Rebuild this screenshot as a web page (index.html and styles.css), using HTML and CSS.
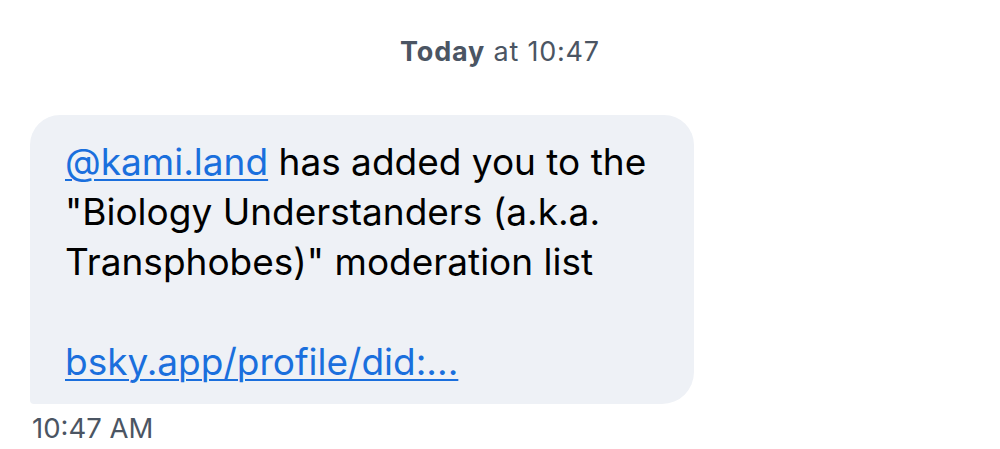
FILE: index.html
```html
<!DOCTYPE html>
<html>
<head>
<meta charset="utf-8">
<link rel="stylesheet" href="styles.css">
</head>
<body>
<div class="chat">
  <div class="date"><span class="day">Today</span> at 10:47</div>
  <div class="msg">
    <div class="bubble">
      <p><a class="link" href="#">@kami.land</a> has added you to the "Biology Understanders (a.k.a. Transphobes)" moderation list</p>
      <p class="gap"><a class="link" href="#">bsky.app/profile/did:...</a></p>
    </div>
    <div class="time">10:47 AM</div>
  </div>
</div>
</body>
</html>
```
FILE: styles.css
```css
html, body {
  margin: 0;
  padding: 0;
  background: #ffffff;
}
body {
  font-family: Inter, "Noto Sans", sans-serif;
  width: 1000px;
  height: 449px;
  overflow: hidden;
}
.chat {
  display: flex;
  flex-direction: column;
}
.date {
  text-align: center;
  font-size: 27px;
  letter-spacing: 0.8px;
  color: #4b5563;
  padding-top: 36px;
  line-height: 32px;
}
.day {
  font-weight: 700;
}
.msg {
  padding-left: 30px;
  padding-top: 47px;
  display: flex;
  flex-direction: column;
  align-items: flex-start;
}
.bubble {
  background: #eef1f6;
  width: 664px;
  box-sizing: border-box;
  padding: 22px 20px 17px 35px;
  border-radius: 30px 30px 32px 4px;
  font-size: 37px;
  line-height: 50px;
  color: #000000;
}
.bubble p {
  margin: 0;
}
.bubble .gap {
  margin-top: 50px;
}
.link {
  color: #1a6fdd;
  text-decoration: underline;
  text-underline-offset: 4px;
  text-decoration-thickness: 2px;
}
.time {
  font-size: 27.5px;
  color: #4b5563;
  padding-top: 4px;
  padding-left: 2px;
  line-height: 40px;
}
```
